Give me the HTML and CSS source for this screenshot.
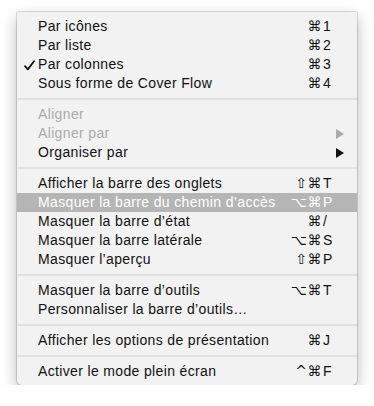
FILE: index.html
```html
<!DOCTYPE html>
<html lang="fr">
<head>
<meta charset="utf-8">
<title>Présentation</title>
<link rel="stylesheet" href="styles.css">
</head>
<body>
<div class="menu">
  <div class="row"><span class="label">Par icônes</span><span class="mods">⌘</span><span class="key">1</span></div>
  <div class="row"><span class="label">Par liste</span><span class="mods">⌘</span><span class="key">2</span></div>
  <div class="row"><svg class="check" width="11" height="11" viewBox="0 0 11 11"><path d="M1 6.2 L3.8 9.4 L10 1.2" fill="none" stroke="#111" stroke-width="1.8" stroke-linecap="round" stroke-linejoin="round"/></svg><span class="label">Par colonnes</span><span class="mods">⌘</span><span class="key">3</span></div>
  <div class="row"><span class="label">Sous forme de Cover Flow</span><span class="mods">⌘</span><span class="key">4</span></div>
  <div class="sep"></div>
  <div class="row disabled"><span class="label">Aligner</span></div>
  <div class="row disabled"><span class="label">Aligner par</span><svg class="arrow" width="8" height="10" viewBox="0 0 8 10"><path d="M0 0 L8 5 L0 10 Z"/></svg></div>
  <div class="row"><span class="label">Organiser par</span><svg class="arrow" width="8" height="10" viewBox="0 0 8 10"><path d="M0 0 L8 5 L0 10 Z"/></svg></div>
  <div class="sep"></div>
  <div class="row"><span class="label">Afficher la barre des onglets</span><span class="mods">⇧⌘</span><span class="key">T</span></div>
  <div class="row hl"><span class="label">Masquer la barre du chemin d’accès</span><span class="mods">⌥⌘</span><span class="key">P</span></div>
  <div class="row"><span class="label">Masquer la barre d’état</span><span class="mods">⌘</span><span class="key">/</span></div>
  <div class="row"><span class="label">Masquer la barre latérale</span><span class="mods">⌥⌘</span><span class="key">S</span></div>
  <div class="row"><span class="label">Masquer l’aperçu</span><span class="mods">⇧⌘</span><span class="key">P</span></div>
  <div class="sep"></div>
  <div class="row"><span class="label">Masquer la barre d’outils</span><span class="mods">⌥⌘</span><span class="key">T</span></div>
  <div class="row"><span class="label">Personnaliser la barre d’outils…</span></div>
  <div class="sep"></div>
  <div class="row"><span class="label">Afficher les options de présentation</span><span class="mods">⌘</span><span class="key">J</span></div>
  <div class="sep"></div>
  <div class="row"><span class="label">Activer le mode plein écran</span><span class="mods">^⌘</span><span class="key">F</span></div>
</div>
</body>
</html>
```

FILE: styles.css
```css
html, body {
  margin: 0;
  padding: 0;
  background: #ffffff;
}

body {
  padding: 12px 0 0 17px;
  font-family: "Liberation Sans", Arial, sans-serif;
  font-size: 14px;
  color: #111;
}

.menu {
  width: 340px;
  box-sizing: border-box;
  padding: 5px 0 4px;
  background: #f2f2f2;
  border-radius: 1px 1px 5px 5px;
  box-shadow: 0 0 0 1px rgba(0, 0, 0, 0.13), 0 6px 16px rgba(0, 0, 0, 0.28);
}

.row {
  position: relative;
  display: flex;
  align-items: center;
  height: 19px;
  line-height: 19px;
  padding-left: 21px;
  letter-spacing: 0.35px;
  white-space: nowrap;
}

.row.hl {
  background: #b5b5b5;
  color: #fff;
}

.row.disabled {
  color: #ababab;
}

.label {
  flex: 1;
}

.check {
  position: absolute;
  left: 7px;
  top: 5px;
}

.mods {
  font-family: "DejaVu Sans", sans-serif;
  font-size: 14px;
  letter-spacing: 0.5px;
  text-align: right;
}

.key {
  width: 20px;
  margin-right: 14px;
  padding-left: 1px;
  letter-spacing: 0;
}

.arrow {
  margin-right: 13px;
  fill: #111;
}

.row.disabled .arrow {
  fill: #ababab;
}

.sep {
  height: 2px;
  margin: 5px 0;
  background: #e1e1e1;
}
```
